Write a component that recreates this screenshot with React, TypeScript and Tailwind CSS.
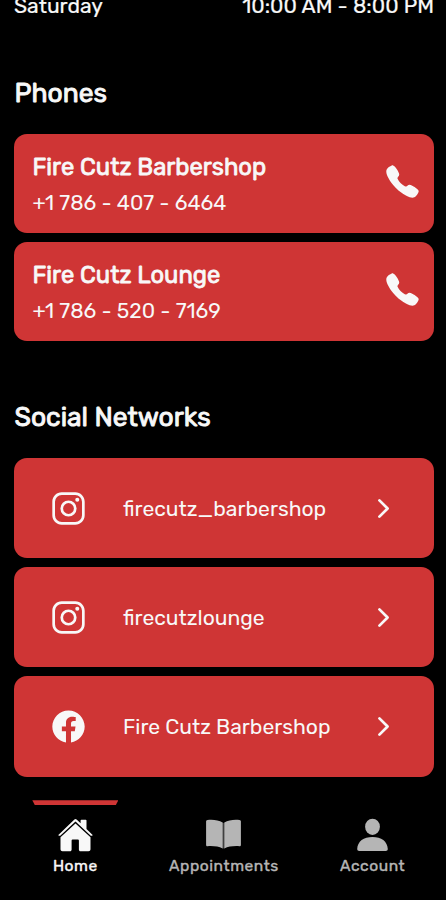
import React from "react";
import {
  IoCall,
  IoChevronForward,
  IoLogoFacebook,
  IoLogoInstagram,
} from "react-icons/io5";

type IconProps = { className?: string };

function HomeIcon({ className }: IconProps) {
  return (
    <svg viewBox="0 0 37 37" fill="currentColor" className={className}>
      <path d="M1.6 17.8 17.4 2.4a1.6 1.6 0 0 1 2.2 0l4 3.9V3.6c0-.4.3-.8.8-.8h4.3c.5 0 .8.4.8.8v8.4l5.9 5.8c.4.4.2.9-.3.9h-.8c-.3 0-.6-.1-.8-.3L18.5 4.5 3.5 18.4c-.2.2-.5.3-.8.3h-.8c-.5 0-.7-.5-.3-.9z" />
      <path d="M18.5 6.5 3.5 20.3V32.2c0 1.2.8 2 2 2h7.5c.9 0 1.6-.6 1.6-1.5v-9.2c0-.5.4-.9.9-.9h5.5c.5 0 .9.4.9.9v9.2c0 .9.7 1.500 1.600 1.500h8c1.200 0 2-.8 2-2V20.3z" />
    </svg>
  );
}

function BookIcon({ className }: IconProps) {
  return (
    <svg viewBox="0 0 37 37" fill="currentColor" className={className}>
      <path d="M2.5 2.9C8.6 2.3 13.4 3.1 17.7 5.6V31.5C13.5 29.4 8.7 28.9 2.5 29.2c-.8 0-1.4-.5-1.4-1.3V4.2c0-.7.6-1.2 1.4-1.3z" />
      <path d="M34.5 2.9C28.4 2.3 23.6 3.1 19.3 5.6V31.5C23.5 29.4 28.3 28.9 34.5 29.2c.8 0 1.4-.5 1.4-1.3V4.2c0-.7-.6-1.2-1.4-1.3z" />
      <path d="M17.5 6h2v25.500h-2z" opacity=".35" />
    </svg>
  );
}

function PersonIcon({ className }: IconProps) {
  return (
    <svg viewBox="0 0 37 37" fill="currentColor" className={className}>
      <ellipse cx="18.5" cy="9.8" rx="7.4" ry="8.1" />
      <path d="M3.200 32c.3-7.700 6.500-12 15.300-12s15 4.300 15.300 12c0 1.300-.8 2-2 2H5.200c-1.200 0-2-.7-2-2z" />
    </svg>
  );
}

const phones = [
  { name: "Fire Cutz Barbershop", number: "786 - 407 - 6464" },
  { name: "Fire Cutz Lounge", number: "786 - 520 - 7169" },
];

const networks = [
  { name: "firecutz_barbershop", Icon: IoLogoInstagram },
  { name: "firecutzlounge", Icon: IoLogoInstagram },
  { name: "Fire Cutz Barbershop", Icon: IoLogoFacebook },
];

const tabs = [
  { name: "Home", Icon: HomeIcon, active: true },
  { name: "Appointments", Icon: BookIcon, active: false },
  { name: "Account", Icon: PersonIcon, active: false },
];

export default function App() {
  return (
    <div className="flex h-[900px] w-[446px] flex-col overflow-hidden bg-black font-['Rubik','Roboto',sans-serif] text-[#f8f8f8]">
      <div className="-mt-2 flex h-7 items-center justify-between pr-3 pl-3.5 text-[21.1px] leading-7 [-webkit-text-stroke:0.2px]">
        <span>Saturday</span>
        <span>10:00 AM - 8:00 PM</span>
      </div>

      <main className="flex flex-col pr-3 pl-3.5">
        <h2 className="mt-[57px] pl-[0.5px] text-[26.4px] leading-8 [-webkit-text-stroke:0.9px]">Phones</h2>
        <div className="mt-[25.4px] flex flex-col gap-[9px]">
          {phones.map((p) => (
            <div key={p.name} className="flex h-[99px] items-center justify-between rounded-[13px] bg-[#cf3535] pr-[13.5px] pl-[18.5px]">
              <div className="flex flex-col pt-[2.5px]">
                <span className="text-[23.75px] leading-[36px] [-webkit-text-stroke:0.8px]">{p.name}</span>
                <span className="text-[21.1px] leading-[36px]">+1 {p.number}</span>
              </div>
              <IoCall className="mb-[5px] size-[37px]" />
            </div>
          ))}
        </div>

        <h2 className="mt-[59.2px] pl-[0.5px] text-[26.4px] leading-8 [-webkit-text-stroke:0.9px]">Social Networks</h2>
        <div className="mt-[25.5px] flex flex-col gap-[9px]">
          {networks.map(({ name, Icon }) => (
            <div key={name} className="flex h-[100.2px] items-center rounded-[13px] bg-[#cf3535] pr-[36px] pl-9">
              <Icon className="size-[37px]" />
              <span className="ml-9 flex-1 pt-px text-[21.1px] leading-8">{name}</span>
              <IoChevronForward className="size-[29px]" />
            </div>
          ))}
        </div>
      </main>

      <nav className="-mr-px mt-[23.5px] grid grid-cols-3 pl-px">
        {tabs.map(({ name, Icon, active }) => (
          <div key={name} className={active ? "flex flex-col items-center text-[#f8f8f8]" : "flex flex-col items-center text-[#b5b5b5]"}>
            <span className={active ? "h-[5px] w-[86px] bg-[#cf3535] [clip-path:polygon(0_0,100%_0,97%_100%,3%_100%)]" : "h-[5px] w-[86px]"} />
            <Icon className="mt-3 size-[37px]" />
            <span className="mt-px text-[15.6px] leading-[22px] tracking-[0.55px] [-webkit-text-stroke:0.4px]">{name}</span>
          </div>
        ))}
      </nav>
    </div>
  );
}
